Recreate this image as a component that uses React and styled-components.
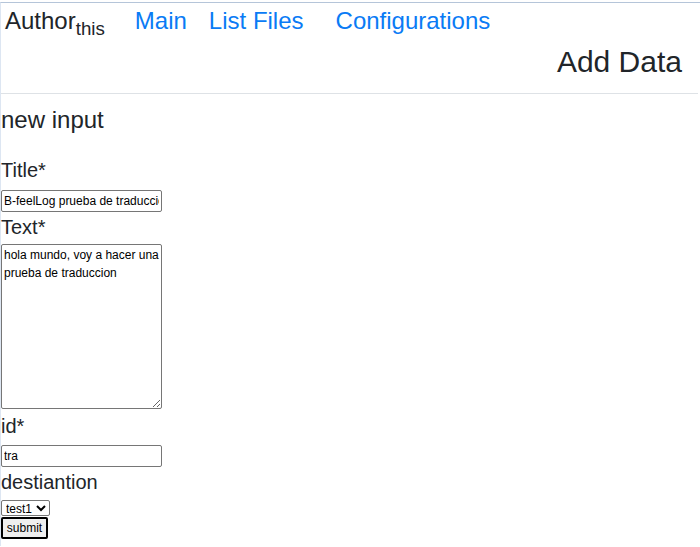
import styled, { createGlobalStyle } from "styled-components";

const GlobalStyle = createGlobalStyle`
  body {
    margin: 0;
    padding-top: 2px;
    font-family: "Liberation Sans", Arial, sans-serif;
    line-height: 1.5;
    color: #212529;
    background: #fff;
  }
`;

const Shell = styled.div`
  border-top: 1px solid #b5c5d9;
  border-left: 1px solid #dde6f2;
  min-height: 544px;
  box-sizing: border-box;
`;

const Header = styled.header`
  border-bottom: 1px solid #dee2e6;
  padding-bottom: 9px;
  margin-right: 2px;
`;

const NavRow = styled.nav`
  display: flex;
  align-items: baseline;
  font-size: 24px;
  line-height: 36px;
  padding-left: 4px;
`;

const Brand = styled.span`
  margin-right: 19px;
  sub {
    font-size: 0.78em;
    vertical-align: -0.3em;
    line-height: 0;
  }
`;

const NavLink = styled.a`
  color: #0a7bf5;
  text-decoration: none;
  padding: 0 11px;
  margin-right: ${(p) => (p.$extra ? "10px" : "0")};
  cursor: pointer;
`;

const PageTitle = styled.h1`
  margin: 0;
  font-size: 30px;
  font-weight: 400;
  line-height: 45px;
  text-align: right;
  padding-right: 16px;
`;

const Main = styled.main`
  padding-top: 8px;
`;

const SectionTitle = styled.h2`
  margin: 0 0 17px;
  font-size: 24px;
  font-weight: 400;
  line-height: 36px;
`;

const Label = styled.label`
  display: block;
  font-size: 20px;
  line-height: 30px;
  margin-top: ${(p) => p.$top || "0"};
  margin-bottom: ${(p) => p.$gap || "0"};
`;

const TextInput = styled.input`
  display: block;
  box-sizing: border-box;
  width: 161px;
  height: 22px;
  margin: 0;
  padding: 1px 2px;
  font-family: "Liberation Sans", Arial, sans-serif;
  font-size: 12px;
  border: 1px solid #767676;
  border-radius: 2px;
  color: #000;
`;

const TextArea = styled.textarea`
  display: block;
  box-sizing: border-box;
  width: 161px;
  height: 165px;
  margin: 0;
  padding: 1px 0 1px 2px;
  font-family: "Liberation Sans", Arial, sans-serif;
  font-size: 12px;
  line-height: 18px;
  border: 1px solid #767676;
  border-radius: 2px;
  color: #000;
`;

const Select = styled.select`
  display: block;
  height: 16px;
  margin: 0;
  font-family: "Liberation Sans", Arial, sans-serif;
  font-size: 12px;
  color: #000;
  border: 1px solid #767676;
  border-radius: 2px;
  background: #fff;
  padding: 0;
`;

const Submit = styled.button`
  display: block;
  box-sizing: border-box;
  width: 47px;
  height: 22px;
  margin: 1px 0 0;
  padding: 0;
  font-family: "Liberation Sans", Arial, sans-serif;
  font-size: 12px;
  color: #000;
  background: #efefef;
  border: 2px solid #000;
  border-radius: 2px;
  cursor: pointer;
`;

export default function App() {
  return (
    <>
      <GlobalStyle />
      <Shell>
        <Header>
          <NavRow>
            <Brand>
              Author<sub>this</sub>
            </Brand>
            <NavLink>Main</NavLink>
            <NavLink $extra>List Files</NavLink>
            <NavLink>Configurations</NavLink>
          </NavRow>
          <PageTitle>Add Data</PageTitle>
        </Header>
        <Main>
          <SectionTitle>new input</SectionTitle>
          <form onSubmit={(e) => e.preventDefault()}>
            <Label htmlFor="title" $top="1px" $gap="5px">Title*</Label>
            <TextInput id="title" defaultValue="B-feelLog prueba de traduccion" />
            <Label htmlFor="text" $gap="2px">Text*</Label>
            <TextArea
              id="text"
              defaultValue="hola mundo, voy a hacer una prueba de traduccion"
            />
            <Label htmlFor="id" $top="2px" $gap="4px">id*</Label>
            <TextInput id="id" defaultValue="tra" />
            <Label htmlFor="dest" $gap="3px">destiantion</Label>
            <Select id="dest" defaultValue="test1">
              <option value="test1">test1</option>
              <option value="test2">test2</option>
            </Select>
            <Submit type="submit">submit</Submit>
          </form>
        </Main>
      </Shell>
    </>
  );
}
